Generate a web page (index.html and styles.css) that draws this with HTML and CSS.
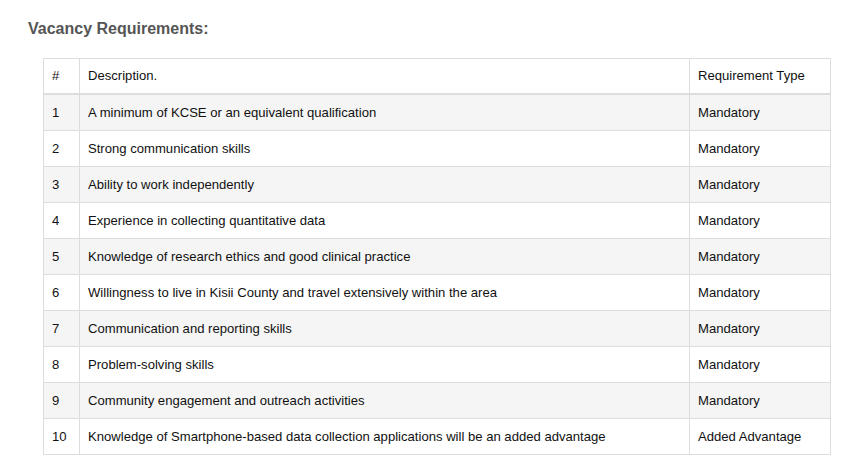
FILE: index.html
```html
<!DOCTYPE html>
<html>
<head>
<meta charset="utf-8">
<link rel="stylesheet" href="styles.css">
</head>
<body>
<div class="page">
  <h3 class="title">Vacancy Requirements:</h3>
  <div class="table-wrap">
    <table class="req">
      <colgroup>
        <col class="c-num"><col class="c-desc"><col class="c-type">
      </colgroup>
      <thead>
        <tr><th>#</th><th>Description.</th><th>Requirement Type</th></tr>
      </thead>
      <tbody>
        <tr><td>1</td><td>A minimum of KCSE or an equivalent qualification</td><td>Mandatory</td></tr>
        <tr><td>2</td><td>Strong communication skills</td><td>Mandatory</td></tr>
        <tr><td>3</td><td>Ability to work independently</td><td>Mandatory</td></tr>
        <tr><td>4</td><td>Experience in collecting quantitative data</td><td>Mandatory</td></tr>
        <tr><td>5</td><td>Knowledge of research ethics and good clinical practice</td><td>Mandatory</td></tr>
        <tr><td>6</td><td>Willingness to live in Kisii County and travel extensively within the area</td><td>Mandatory</td></tr>
        <tr><td>7</td><td>Communication and reporting skills</td><td>Mandatory</td></tr>
        <tr><td>8</td><td>Problem-solving skills</td><td>Mandatory</td></tr>
        <tr><td>9</td><td>Community engagement and outreach activities</td><td>Mandatory</td></tr>
        <tr><td>10</td><td>Knowledge of Smartphone-based data collection applications will be an added advantage</td><td>Added Advantage</td></tr>
      </tbody>
    </table>
  </div>
</div>
</body>
</html>
```
FILE: styles.css
```css
html, body {
  margin: 0;
  padding: 0;
  background: #fff;
}
body {
  font-family: "Liberation Sans", Arial, sans-serif;
  color: #111;
}
.page {
  padding: 17px 0 0 28px;
}
.title {
  margin: 0;
  font-size: 16px;
  line-height: 24px;
  font-weight: bold;
  color: #555;
}
.table-wrap {
  padding: 17px 0 0 15px;
}
.req {
  border-collapse: collapse;
  width: 788px;
  font-size: 13.1px;
  line-height: 19px;
  table-layout: fixed;
}
.c-num { width: 36px; }
.c-type { width: 141px; }
.req th, .req td {
  border: 1px solid #ddd;
  padding: 8px;
  text-align: left;
  vertical-align: middle;
  font-weight: normal;
  color: #111;
}
.req thead th {
  padding-top: 7px;
  border-bottom: 2px solid #ddd;
}
.req tbody tr:nth-child(odd) td {
  background: #f5f5f5;
}
```
